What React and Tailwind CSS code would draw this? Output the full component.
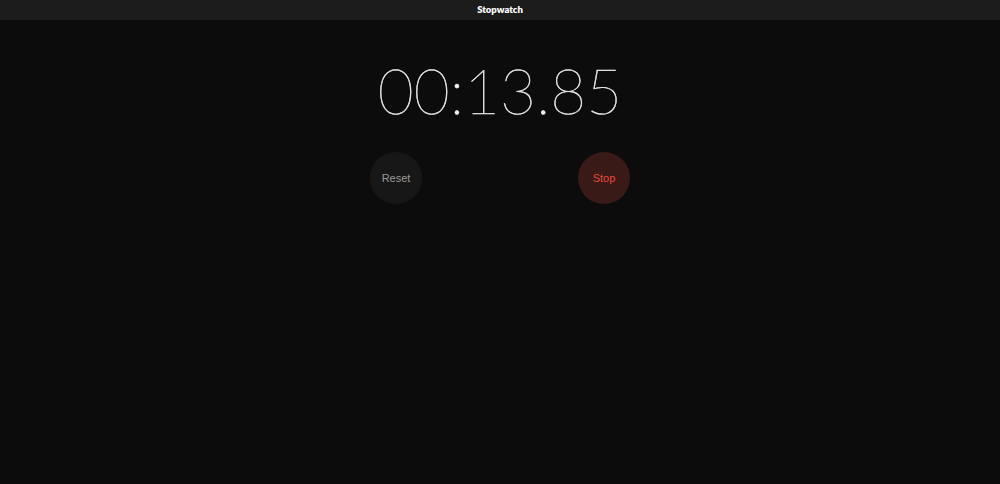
export default function App() {
  return (
    <div className="w-[1000px] h-[484px] bg-[#0c0c0c] flex flex-col">
      {/* Title bar */}
      <div className="h-5 bg-[#1c1c1c] flex items-center justify-center">
        <span className="font-['Lato',sans-serif] font-extrabold text-[9.5px] text-white">Stopwatch</span>
      </div>

      {/* Time */}
      <div className="flex justify-center mt-[34px]">
        <span className="font-['Lato',sans-serif] font-thin text-[62px] leading-[72px] text-[#f2f2f2] [-webkit-text-stroke:0.5px_#e8e8e8]">
          00:13.85
        </span>
      </div>

      {/* Controls */}
      <div className="flex justify-center gap-[156px] mt-[26px]">
        <button className="w-[52px] h-[52px] rounded-full bg-[#171717] flex items-center justify-center font-['Liberation_Sans',sans-serif] text-[11px] text-[#9a9a9a]">
          Reset
        </button>
        <button className="w-[52px] h-[52px] rounded-full bg-[#3a1a17] flex items-center justify-center font-['Liberation_Sans',sans-serif] text-[11px] text-[#e6483c]">
          Stop
        </button>
      </div>
    </div>
  );
}
